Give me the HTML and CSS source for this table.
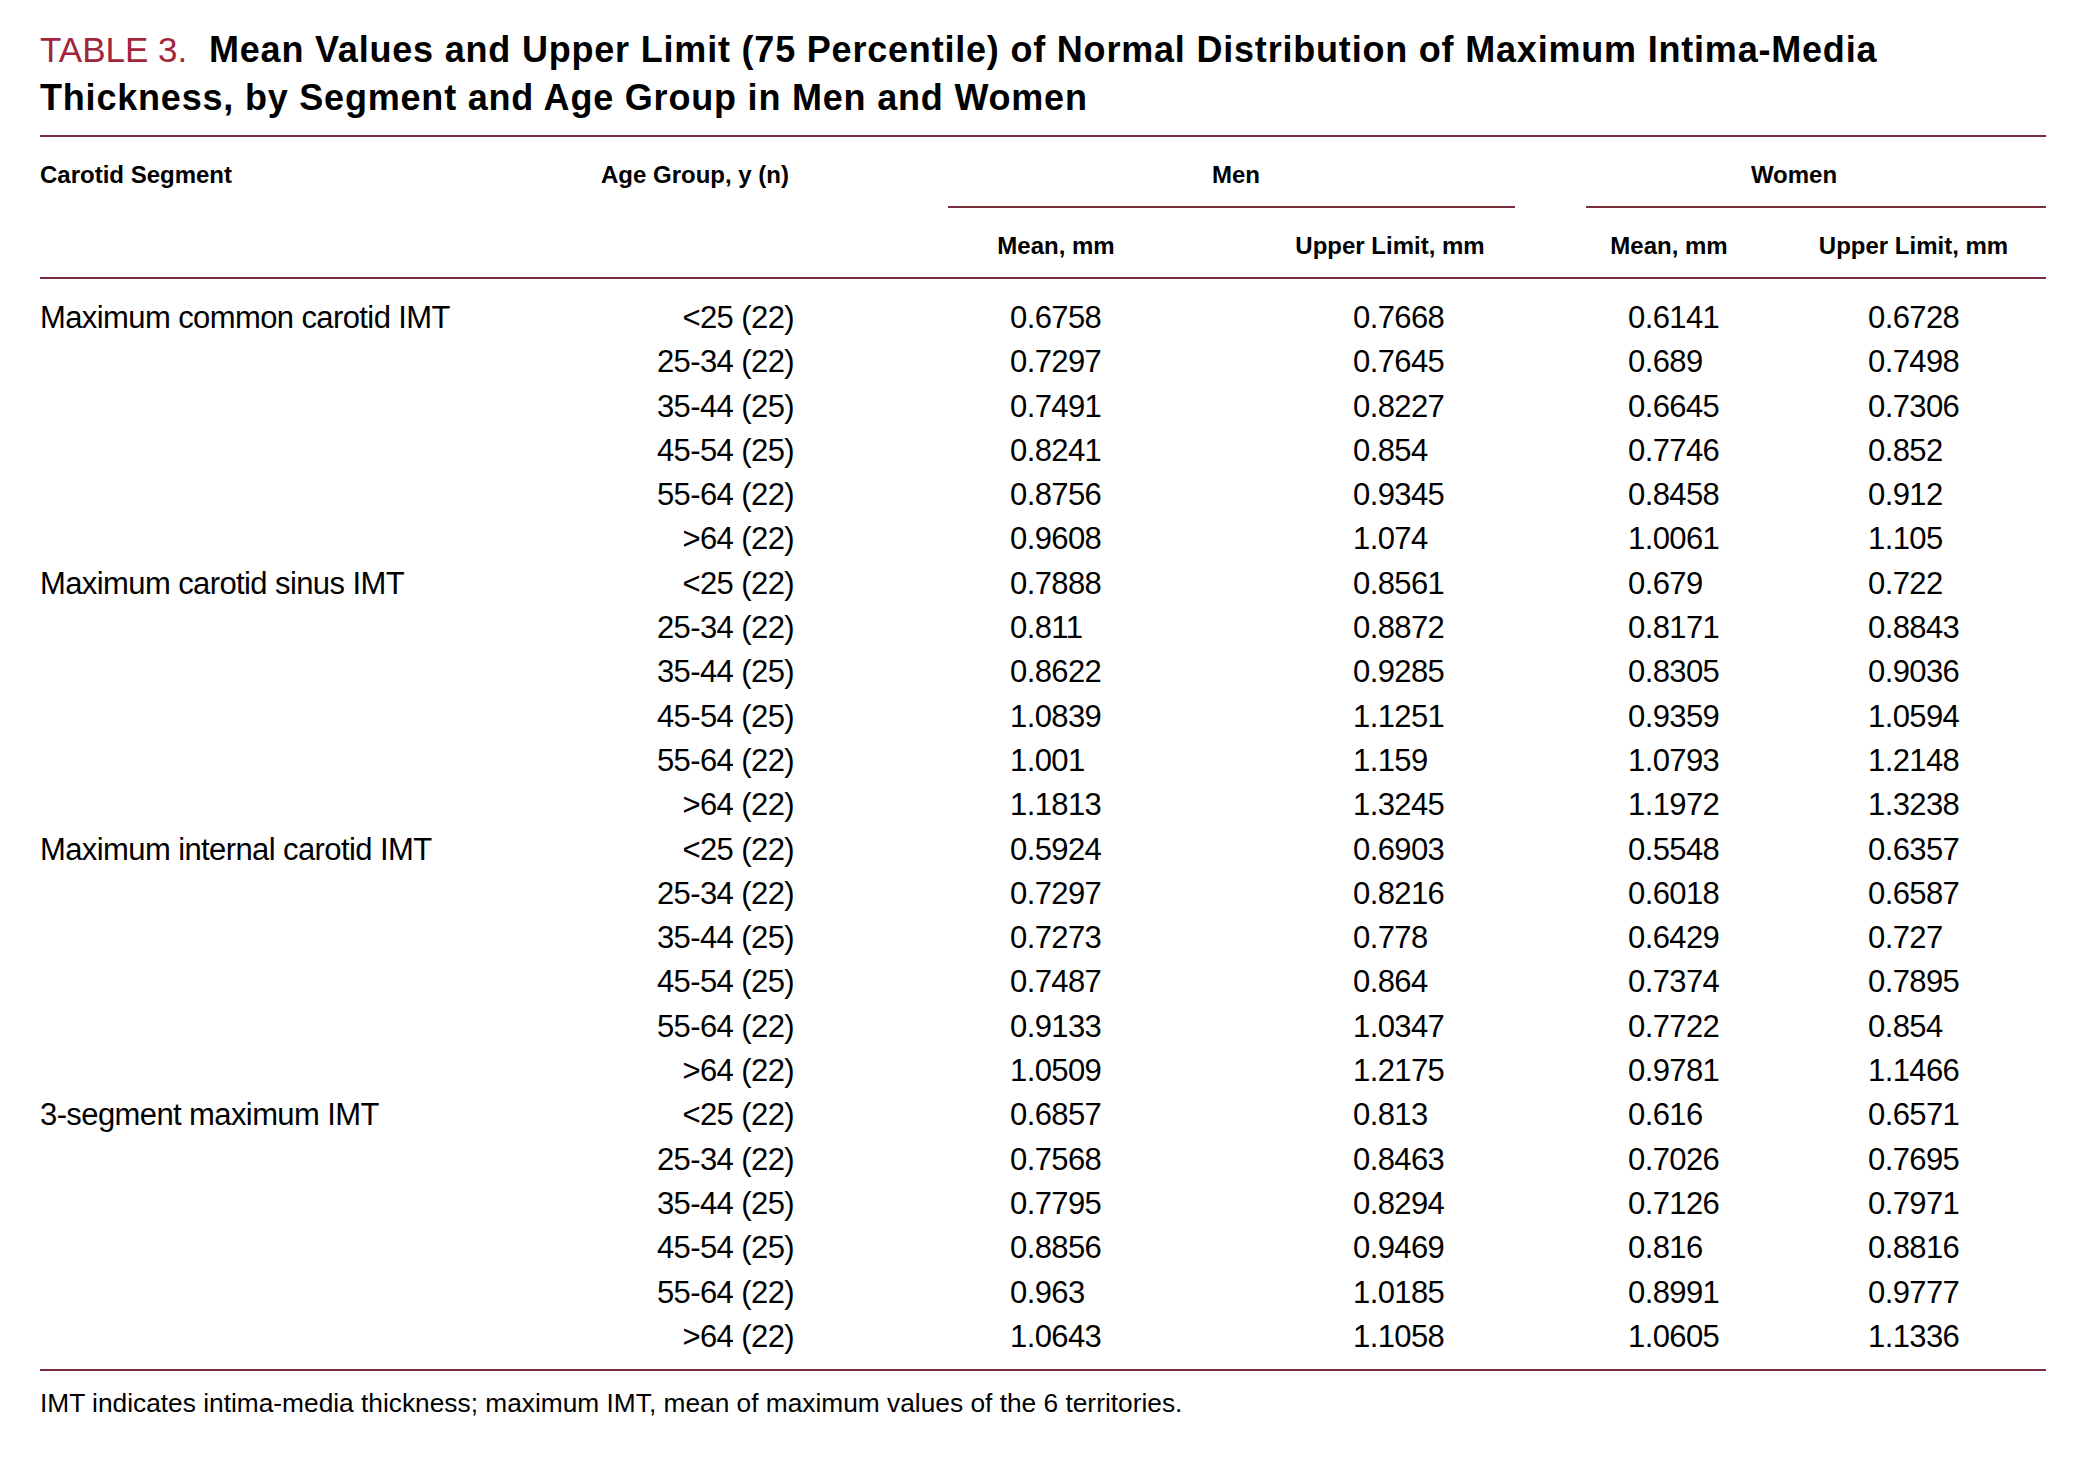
FILE: index.html
```html
<!DOCTYPE html>
<html lang="en">
<head>
<meta charset="utf-8">
<title>Table 3</title>
<link rel="stylesheet" href="styles.css">
</head>
<body>
<div class="page">
  <h1 class="title"><span class="label">TABLE 3.</span> Mean Values and Upper Limit (75 Percentile) of Normal Distribution of Maximum Intima-Media<br>Thickness, by Segment and Age Group in Men and Women</h1>

  <div class="thead">
    <div class="th th-seg">Carotid Segment</div>
    <div class="th th-age">Age Group, y (n)</div>
    <div class="th th-group th-men">Men</div>
    <div class="th th-group th-women">Women</div>
    <div class="th th-sub th-c3">Mean, mm</div>
    <div class="th th-sub">Upper Limit, mm</div>
    <div class="th th-sub">Mean, mm</div>
    <div class="th th-sub">Upper Limit, mm</div>
  </div>

  <div class="tbody">
    <div class="seg">Maximum common carotid IMT</div><div class="age">&lt;25 (22)</div><div class="v c3">0.6758</div><div class="v c4">0.7668</div><div class="v c5">0.6141</div><div class="v c6">0.6728</div>
    <div class="seg"></div><div class="age">25-34 (22)</div><div class="v c3">0.7297</div><div class="v c4">0.7645</div><div class="v c5">0.689</div><div class="v c6">0.7498</div>
    <div class="seg"></div><div class="age">35-44 (25)</div><div class="v c3">0.7491</div><div class="v c4">0.8227</div><div class="v c5">0.6645</div><div class="v c6">0.7306</div>
    <div class="seg"></div><div class="age">45-54 (25)</div><div class="v c3">0.8241</div><div class="v c4">0.854</div><div class="v c5">0.7746</div><div class="v c6">0.852</div>
    <div class="seg"></div><div class="age">55-64 (22)</div><div class="v c3">0.8756</div><div class="v c4">0.9345</div><div class="v c5">0.8458</div><div class="v c6">0.912</div>
    <div class="seg"></div><div class="age">&gt;64 (22)</div><div class="v c3">0.9608</div><div class="v c4">1.074</div><div class="v c5">1.0061</div><div class="v c6">1.105</div>

    <div class="seg">Maximum carotid sinus IMT</div><div class="age">&lt;25 (22)</div><div class="v c3">0.7888</div><div class="v c4">0.8561</div><div class="v c5">0.679</div><div class="v c6">0.722</div>
    <div class="seg"></div><div class="age">25-34 (22)</div><div class="v c3">0.811</div><div class="v c4">0.8872</div><div class="v c5">0.8171</div><div class="v c6">0.8843</div>
    <div class="seg"></div><div class="age">35-44 (25)</div><div class="v c3">0.8622</div><div class="v c4">0.9285</div><div class="v c5">0.8305</div><div class="v c6">0.9036</div>
    <div class="seg"></div><div class="age">45-54 (25)</div><div class="v c3">1.0839</div><div class="v c4">1.1251</div><div class="v c5">0.9359</div><div class="v c6">1.0594</div>
    <div class="seg"></div><div class="age">55-64 (22)</div><div class="v c3">1.001</div><div class="v c4">1.159</div><div class="v c5">1.0793</div><div class="v c6">1.2148</div>
    <div class="seg"></div><div class="age">&gt;64 (22)</div><div class="v c3">1.1813</div><div class="v c4">1.3245</div><div class="v c5">1.1972</div><div class="v c6">1.3238</div>

    <div class="seg">Maximum internal carotid IMT</div><div class="age">&lt;25 (22)</div><div class="v c3">0.5924</div><div class="v c4">0.6903</div><div class="v c5">0.5548</div><div class="v c6">0.6357</div>
    <div class="seg"></div><div class="age">25-34 (22)</div><div class="v c3">0.7297</div><div class="v c4">0.8216</div><div class="v c5">0.6018</div><div class="v c6">0.6587</div>
    <div class="seg"></div><div class="age">35-44 (25)</div><div class="v c3">0.7273</div><div class="v c4">0.778</div><div class="v c5">0.6429</div><div class="v c6">0.727</div>
    <div class="seg"></div><div class="age">45-54 (25)</div><div class="v c3">0.7487</div><div class="v c4">0.864</div><div class="v c5">0.7374</div><div class="v c6">0.7895</div>
    <div class="seg"></div><div class="age">55-64 (22)</div><div class="v c3">0.9133</div><div class="v c4">1.0347</div><div class="v c5">0.7722</div><div class="v c6">0.854</div>
    <div class="seg"></div><div class="age">&gt;64 (22)</div><div class="v c3">1.0509</div><div class="v c4">1.2175</div><div class="v c5">0.9781</div><div class="v c6">1.1466</div>

    <div class="seg">3-segment maximum IMT</div><div class="age">&lt;25 (22)</div><div class="v c3">0.6857</div><div class="v c4">0.813</div><div class="v c5">0.616</div><div class="v c6">0.6571</div>
    <div class="seg"></div><div class="age">25-34 (22)</div><div class="v c3">0.7568</div><div class="v c4">0.8463</div><div class="v c5">0.7026</div><div class="v c6">0.7695</div>
    <div class="seg"></div><div class="age">35-44 (25)</div><div class="v c3">0.7795</div><div class="v c4">0.8294</div><div class="v c5">0.7126</div><div class="v c6">0.7971</div>
    <div class="seg"></div><div class="age">45-54 (25)</div><div class="v c3">0.8856</div><div class="v c4">0.9469</div><div class="v c5">0.816</div><div class="v c6">0.8816</div>
    <div class="seg"></div><div class="age">55-64 (22)</div><div class="v c3">0.963</div><div class="v c4">1.0185</div><div class="v c5">0.8991</div><div class="v c6">0.9777</div>
    <div class="seg"></div><div class="age">&gt;64 (22)</div><div class="v c3">1.0643</div><div class="v c4">1.1058</div><div class="v c5">1.0605</div><div class="v c6">1.1336</div>
  </div>

  <p class="note">IMT indicates intima-media thickness; maximum IMT, mean of maximum values of the 6 territories.</p>
</div>
</body>
</html>
```
FILE: styles.css
```css
html, body {
  margin: 0;
  padding: 0;
  background: #ffffff;
}

body {
  font-family: "Liberation Sans", Arial, sans-serif;
  color: #000000;
}

.page {
  width: 2006px;
  padding: 26px 0 0 40px;
}

.title {
  margin: 0 0 13px 0;
  font-size: 36px;
  letter-spacing: 0.8px;
  line-height: 48px;
  font-weight: 700;
  color: #000000;
}

.title .label {
  font-size: 35px;
  letter-spacing: 0;
  font-weight: 400;
  color: #a1263b;
  margin-right: 11px;
}

.thead,
.tbody {
  display: grid;
  grid-template-columns: 561px 193px 429px 334px 224px 265px;
}

.thead {
  border-top: 2px solid #7a2f3e;
  border-bottom: 2px solid #7a2f3e;
}

.th {
  font-size: 24px;
  line-height: 30px;
  font-weight: 700;
  padding-top: 23px;
  padding-bottom: 16px;
}

.th-seg {
  grid-column: 1;
  grid-row: 1 / span 2;
}

.th-age {
  grid-column: 2;
  grid-row: 1 / span 2;
}

.th-group {
  grid-row: 1;
  text-align: center;
  border-bottom: 2px solid #7a2f3e;
}

.th-men {
  grid-column: 3 / span 2;
  margin-left: 154px;
  margin-right: 42px;
  padding-left: 9px;
}

.th-women {
  grid-column: 5 / span 2;
  margin-left: 29px;
  padding-right: 44px;
}

.th-sub {
  grid-row: 2;
  text-align: center;
}

.th-c3 {
  padding-left: 95px;
}

.tbody {
  padding-top: 17px;
  padding-bottom: 10px;
  border-bottom: 2px solid #7a2f3e;
  font-size: 31px;
  letter-spacing: -0.6px;
  line-height: 44.3px;
}

.seg {
  white-space: nowrap;
}

.age {
  text-align: right;
}

.v {
  text-align: left;
}

.c3 { padding-left: 216px; }
.c4 { padding-left: 130px; }
.c5 { padding-left: 71px; }
.c6 { padding-left: 87px; }

.note {
  margin: 17px 0 0 0;
  font-size: 26.3px;
  line-height: 30px;
}
```
